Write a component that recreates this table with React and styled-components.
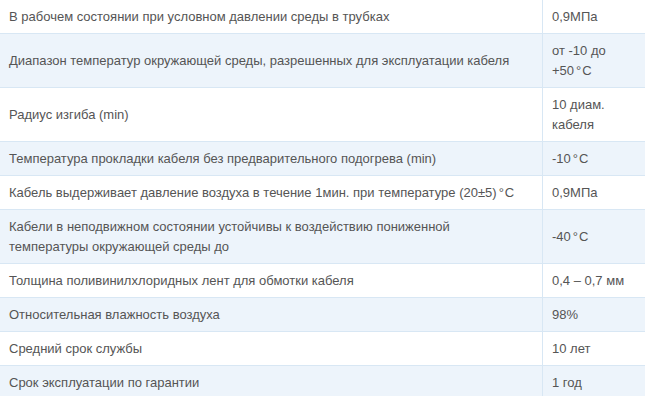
import React from 'react'
import styled, { createGlobalStyle } from 'styled-components'

const rows = [
   ['В рабочем состоянии при условном давлении среды в трубках', '0,9МПа'],
   ['Диапазон температур окружающей среды, разрешенных для эксплуатации кабеля', 'от -10 до +50°С'],
   ['Радиус изгиба (min)', '10 диам. кабеля'],
   ['Температура прокладки кабеля без предварительного подогрева (min)', '-10°С'],
   ['Кабель выдерживает давление воздуха в течение 1мин. при температуре (20±5)°С', '0,9МПа'],
   ['Кабели в неподвижном состоянии устойчивы к воздействию пониженной\nтемпературы окружающей среды до', '-40°С'],
   ['Толщина поливинилхлоридных лент для обмотки кабеля', '0,4 – 0,7 мм'],
   ['Относительная влажность воздуха', '98%'],
   ['Средний срок службы', '10 лет'],
   ['Срок эксплуатации по гарантии', '1 год'],
]

const GlobalStyle = createGlobalStyle`
   html, body {
      margin: 0;
      padding: 0;
      background: #fff;
      overflow: hidden;
   }
`

const Table = styled.div`
   width: 645px;
   font-family: 'Liberation Sans', Arial, sans-serif;
   font-size: 13px;
   line-height: 20px;
   color: #555;
`

const Row = styled.div`
   display: grid;
   grid-template-columns: 543px 102px;
   background: ${props => (props.shaded ? '#edf4fb' : '#fff')};
   border-bottom: 1px solid #d8e7f4;
`

const Cell = styled.div`
   display: flex;
   align-items: center;
   padding: 7px 9px 6px;
   white-space: pre-line;
   border-right: ${props => (props.first ? '1px solid #d8e7f4' : 'none')};
`

const Deg = styled.span`
   margin: 0 1px 0 2px;
`

// the degree sign sits a little apart from the digits in the picture
const withDegrees = text => {
   const parts = text.split('°')
   return (
      <span>
         {parts.map((part, i) => (
            <React.Fragment key={i}>
               {i > 0 && <Deg>°</Deg>}
               {part}
            </React.Fragment>
         ))}
      </span>
   )
}

const App = () => (
   <>
      <GlobalStyle />
      <Table>
         {rows.map(([label, value], i) => (
            <Row key={i} shaded={i % 2 === 1}>
               <Cell first>{withDegrees(label)}</Cell>
               <Cell>{withDegrees(value)}</Cell>
            </Row>
         ))}
      </Table>
   </>
)

export default App
